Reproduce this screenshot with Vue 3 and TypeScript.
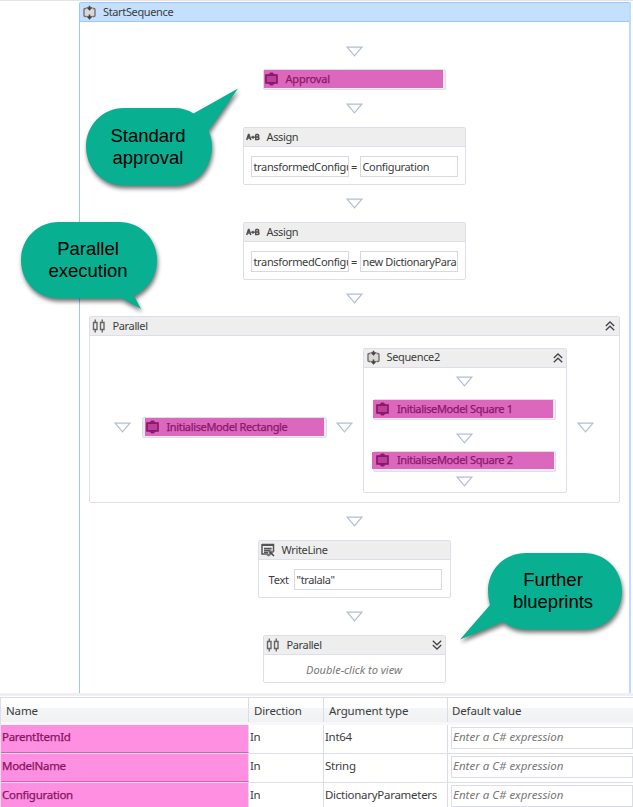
<script setup lang="ts">
interface Argument {
  name: string
  direction: string
  type: string
}

interface Callout {
  id: string
  lines: string[]
  path: string
}

const placeholder = 'Enter a C# expression'

const args: Argument[] = [
  { name: 'ParentItemId', direction: 'In', type: 'Int64' },
  { name: 'ModelName', direction: 'In', type: 'String' },
  { name: 'Configuration', direction: 'In', type: 'DictionaryParameters' },
]

const assigns = [
  { to: 'transformedConfigu', value: 'Configuration' },
  { to: 'transformedConfigu', value: 'new DictionaryPara' },
]

const callouts: Callout[] = [
  {
    id: 'approval',
    lines: ['Standard', 'approval'],
    path: 'M38 20H89Q99 20 107.5 25.5L152 .5L122.5 43Q126 50 126 58.500C126 81 110 97.500 89 97.500H38C16 97.500 0 80 0 58.500C0 38 16 20 38 20Z',
  },
  {
    id: 'parallel',
    lines: ['Parallel', 'execution'],
    path: 'M38 0H98C120 0 136 17 136 38Q136 62 113 74L120 87L101 76.500H38C16 76.500 0 60 0 38C0 17 16 0 38 0Z',
  },
  {
    id: 'further',
    lines: ['Further', 'blueprints'],
    path: 'M66 0H124C146 0 162 17 162 38C162 60 146 76.500 124 76.500H66Q53 76.500 43 69L0 86.500L30 52Q28 45 28 38C28 17 44 0 66 0Z',
  },
]
</script>

<template>
  <div class="page">
    <svg class="defs" aria-hidden="true">
      <symbol id="tri" viewBox="0 0 17 11">
        <path d="M1.200 1.200H15.800L8.500 9.800Z" fill="#fff" stroke="#b4bfd0" stroke-width="1.200" />
      </symbol>
      <symbol id="seq" viewBox="0 0 13 15">
        <path d="M1 4.500Q1 3.500 2 3.500H11Q12 3.500 12 4.500V10.500Q12 11.500 11 11.500H2Q1 11.500 1 10.500Z" fill="#d9d8d6" />
        <path d="M3.500 3.500H2Q1 3.500 1 4.500V10.500Q1 11.500 2 11.500H3.500M9.500 3.500H11Q12 3.500 12 4.500V10.500Q12 11.500 11 11.500H9.500" fill="none" stroke="#77716e" stroke-width="1.400" />
        <path d="M5.700 .7H7.300V2.300H9.700L6.500 5.800L3.300 2.300H5.700ZM5.700 9.500H7.300V11.200H9.700L6.500 14.700L3.300 11.200H5.700Z" fill="#484442" />
      </symbol>
      <symbol id="act" viewBox="0 0 13 14">
        <path d="M1 3.200H12V10.800H1Z" fill="#bc3f9a" stroke="#8b176b" stroke-width="1.700" />
        <path d="M3 2.800L5.500 .4H7.500L10 2.800ZM3 11.200L5.500 13.600H7.500L10 11.200Z" fill="#8b176b" />
      </symbol>
      <symbol id="par" viewBox="0 0 14 14">
        <path d="M1.500 3.500H5V10.500H1.500ZM8.500 3.500H12V10.500H8.500ZM3.250 .5V3.500M3.250 10.500V13.500M10.250 .5V3.500M10.250 10.500V13.500" fill="none" stroke="#666" stroke-width="1.400" />
      </symbol>
      <symbol id="chev" viewBox="0 0 10 10">
        <path d="M.8 5L5 1L9.200 5M.8 9.200L5 5.200L9.200 9.200" fill="none" stroke="#444" stroke-width="1.300" />
      </symbol>
      <symbol id="write" viewBox="0 0 14 14">
        <path d="M1 1.500H12.500V9M1 1V11H7" fill="none" stroke="#555" stroke-width="1.500" />
        <path d="M1 2H12.500" stroke="#555" stroke-width="2" />
        <path d="M3 4.500H10.500V9.500H3Z" fill="#999" />
        <path d="M3 5.500H10.500M3 7.500H9M3 9.500H7" stroke="#555" stroke-width="1" />
        <path d="M5.500 12.500L11 7.500L13 9L8 13.500Z" fill="#777" />
        <path d="M8.500 8.500L13 13" stroke="#444" stroke-width="1.500" />
      </symbol>
      <symbol id="ab" viewBox="0 0 14 8">
        <path d="M.7 7L2.500 1.500H3L4.800 7M1.500 5H4M9.700 1.500V6.500H11.700Q13 6.300 13 5.200Q13 4 11.500 4H10M9.700 1.500H11.500Q12.700 1.600 12.700 2.700Q12.700 3.800 11.500 4" fill="none" stroke="#505050" stroke-width="1.500" />
        <path d="M5.200 4.200H8.800M7 2.700V5.700" stroke="#505050" stroke-width="1.400" />
      </symbol>
    </svg>

    <main class="designer">
      <header class="bar root-bar">
        <svg class="i-seq"><use href="#seq" /></svg>
        <span class="t-start">StartSequence</span>
      </header>

      <div class="flow">
        <svg class="tri"><use href="#tri" /></svg>

        <div class="chip chip-approval">
          <div class="fill"><svg class="i-act"><use href="#act" /></svg><span>Approval</span></div>
        </div>
        <svg class="tri"><use href="#tri" /></svg>

        <template v-for="(a, i) in assigns" :key="i">
          <section class="card assign">
            <header class="bar">
              <svg class="i-ab"><use href="#ab" /></svg>
              <span>Assign</span>
            </header>
            <div class="assign-body">
              <div class="field">{{ a.to }}</div>
              <span class="eq">=</span>
              <div class="field">{{ a.value }}</div>
            </div>
          </section>
          <svg class="tri"><use href="#tri" /></svg>
        </template>

        <section class="card parallel">
          <header class="bar">
            <svg class="i-par"><use href="#par" /></svg>
            <span class="t-par">Parallel</span>
            <svg class="chev"><use href="#chev" /></svg>
          </header>
          <div class="branches">
            <svg class="tri"><use href="#tri" /></svg>
            <div class="chip chip-rect">
              <div class="fill"><svg class="i-act"><use href="#act" /></svg><span>InitialiseModel Rectangle</span></div>
            </div>
            <svg class="tri"><use href="#tri" /></svg>
            <section class="card sequence">
              <header class="bar">
                <svg class="i-seq"><use href="#seq" /></svg>
                <span>Sequence2</span>
                <svg class="chev"><use href="#chev" /></svg>
              </header>
              <div class="steps">
                <svg class="tri"><use href="#tri" /></svg>
                <div class="chip">
                  <div class="fill"><svg class="i-act"><use href="#act" /></svg><span>InitialiseModel Square 1</span></div>
                </div>
                <svg class="tri"><use href="#tri" /></svg>
                <div class="chip chip-last">
                  <div class="fill"><svg class="i-act"><use href="#act" /></svg><span>InitialiseModel Square 2</span></div>
                </div>
                <svg class="tri"><use href="#tri" /></svg>
              </div>
            </section>
            <svg class="tri tri-end"><use href="#tri" /></svg>
          </div>
        </section>
        <svg class="tri"><use href="#tri" /></svg>

        <section class="card write">
          <header class="bar">
            <svg class="i-write"><use href="#write" /></svg>
            <span>WriteLine</span>
          </header>
          <div class="write-body">
            <label>Text</label>
            <div class="field">"tralala"</div>
          </div>
        </section>
        <svg class="tri"><use href="#tri" /></svg>

        <section class="card collapsed">
          <header class="bar">
            <svg class="i-par"><use href="#par" /></svg>
            <span class="t-par">Parallel</span>
            <svg class="chev down"><use href="#chev" /></svg>
          </header>
          <div class="hint">Double-click to view</div>
        </section>
      </div>
    </main>

    <div class="splitter"></div>

    <div class="arguments">
      <div class="row head">
        <div>Name</div>
        <div>Direction</div>
        <div>Argument type</div>
        <div>Default value</div>
      </div>
      <div v-for="arg in args" :key="arg.name" class="row">
        <div class="name">{{ arg.name }}</div>
        <div>{{ arg.direction }}</div>
        <div>{{ arg.type }}</div>
        <div class="value"><span>{{ placeholder }}</span></div>
      </div>
    </div>

    <div v-for="c in callouts" :key="c.id" class="callout" :class="c.id">
      <svg><path :d="c.path" fill="#09af91" /></svg>
      <p><span v-for="line in c.lines" :key="line">{{ line }}</span></p>
    </div>
  </div>
</template>

<style>
body {
  margin: 0;
  background: #fff;
  overflow: hidden;
}
</style>

<style scoped>
.page {
  position: relative;
  box-sizing: border-box;
  width: 633px;
  height: 807px;
  overflow: hidden;
  border-top: 1px solid #e4e4ec;
  font: 11px/16px "Noto Sans", "Open Sans", sans-serif;
  letter-spacing: -0.36px;
  color: #3c3c3c;
  background: #fff;
  white-space: nowrap;
}
.page * { box-sizing: border-box; }
.defs { position: absolute; width: 0; height: 0; }
svg { display: block; flex: none; }

.designer {
  width: 552px;
  height: 691px;
  margin: 1px 0 0 79px;
  border: 1px solid #99c8fb;
  border-right: 2px solid #badcff;
  border-bottom: 0;
  border-radius: 2px 0 0 0;
}
.bar {
  display: flex;
  align-items: center;
  height: 19px;
  background: #eee;
  border-bottom: 1px solid #dedee8;
}
.bar span { position: relative; top: -0.500px; }
.root-bar { padding-left: 3px; background: #c5e0ff; border-color: #99c8fb; }
.i-seq { width: 13px; height: 15px; margin-right: 7px; }
.i-par { width: 14px; height: 14px; margin-right: 7px; }
.i-write { width: 14px; height: 14px; margin-right: 7px; }
.i-ab { width: 14px; height: 8px; margin-right: 7px; }
.i-act { width: 13px; height: 14px; margin-right: 8px; }
.chev { width: 10px; height: 10px; margin-left: auto; }
.down { transform: rotate(180deg); }

.flow {
  display: flex;
  flex-direction: column;
  align-items: center;
  padding: 24px 1px 0 0;
}
.tri { width: 17px; height: 11px; }
.card {
  flex: none;
  border: 1px solid #dedee8;
  border-radius: 2px;
  background: #fff;
}
.chip {
  flex: none;
  width: 183px;
  height: 21px;
  background: #ececf0;
  border: 1px solid #dedee8;
  border-radius: 2px;
}
.fill {
  display: flex;
  align-items: center;
  width: 180px;
  height: 18px;
  padding-left: 2px;
  background: #dc68be;
  color: #8b176b;
  -webkit-text-stroke: 0.25px #8b176b;
}
.chip-approval { margin: 12px 0 13px; }
.chip-approval .fill { width: 179px; padding-left: 1px; letter-spacing: -0.2px; }
.assign { width: 223px; height: 58px; margin: 13px 0; }
.assign .bar { padding-left: 2px; }
.assign-body { display: flex; align-items: center; padding: 9px 0 0 7px; }
.field {
  width: 98px;
  height: 21px;
  padding: 2px 0 0 2px;
  border: 1px solid #d8d8e4;
  overflow: hidden;
  line-height: 16px;
}
.eq { width: 11px; text-align: center; }

.parallel { width: 531px; height: 187px; margin: 12px 0 13px; }
.parallel > .bar { padding: 0 4px 0 2px; }
.branches { display: flex; align-items: center; height: 167px; padding-left: 24px; }
.branches > .tri { margin-top: 15px; }
.chip-rect { width: 185px; margin: 16px 9px 0 11px; padding-left: 2px; }
.chip-rect .fill { width: 179px; padding-left: 1px; }
.sequence { width: 204px; height: 145px; margin: 1px 10px 0; }
.sequence > .bar { padding: 0 3px; }
.steps { display: flex; flex-direction: column; align-items: center; padding-top: 8px; }
.steps .chip { margin: 12px 0 13px; }
.steps .fill { padding-left: 3px; margin-left: -1px; }
.steps .chip-last { margin: 7px 0 4px; }
.steps .chip-last .fill { width: 182px; height: 17px; margin-left: -2px; padding-left: 4px; }

.write { width: 193px; height: 58px; margin: 13px 0; }
.write .bar { padding-left: 2px; }
.write-body { display: flex; align-items: center; gap: 6px; padding: 9px 0 0 10px; }
.write label { width: 19px; letter-spacing: -0.2px; }
.write .field { width: 148px; }
.collapsed { width: 183px; height: 48px; margin-top: 13px; }
.collapsed .bar { padding: 0 3px 0 2px; }
.hint { padding-top: 7px; text-align: center; font-style: italic; color: #777; letter-spacing: 0; }

.splitter { height: 4px; background: #f0f0f2; border-bottom: 1px solid #fff; }
.arguments { border-top: 1px solid #dcdce6; border-left: 1px solid #dedee8; font-size: 11.500px; letter-spacing: -0.28px; }
.row {
  display: grid;
  grid-template-columns: 248px 75px 124px 186px;
  height: 29px;
  border-bottom: 1px solid #dedee8;
}
.row > div { padding: 4px 0 0 1px; border-right: 1px solid #dcdce6; }
.row.head { height: 27px; border-bottom: 3px solid #f8f8fa; background: linear-gradient(#fff 40%, #f4f5f6 41%, #f1f2f4); }
.row.head > div { padding: 5px 0 0 5px; letter-spacing: -0.15px; }
.row.head > div:last-child { padding-left: 4px; }
.row .name { background: #ff8fe1; color: #85155f; -webkit-text-stroke: 0.25px #85155f; border-bottom: 1px solid #d45fb4; }
.row .value { padding: 2px 0 0 3px; }
.value span {
  display: block;
  height: 22px;
  padding: 1px;
  border: 1px solid #dcdce6;
  font-style: italic;
  color: #777;
  letter-spacing: 0;
}

.callout { position: absolute; font: 18.500px/22px "Liberation Sans", Arial, sans-serif; letter-spacing: 0; color: #000; }
.callout svg { overflow: visible; width: 100%; height: 100%; filter: drop-shadow(1.500px 3px 2px rgba(0, 0, 0, 0.55)); }
.callout p { position: absolute; margin: 0; text-align: center; }
.callout p span { display: block; }
.approval { left: 86px; top: 87px; width: 152px; height: 98px; }
.approval p { left: 0; top: 37px; width: 124px; }
.parallel.callout { left: 21px; top: 221px; width: 136px; height: 87px; margin: 0; }
.parallel.callout p { left: 0; top: 16px; width: 134px; }
.further { left: 460px; top: 552px; width: 162px; height: 87px; }
.further p { left: 27px; top: 16px; width: 132px; }
</style>
